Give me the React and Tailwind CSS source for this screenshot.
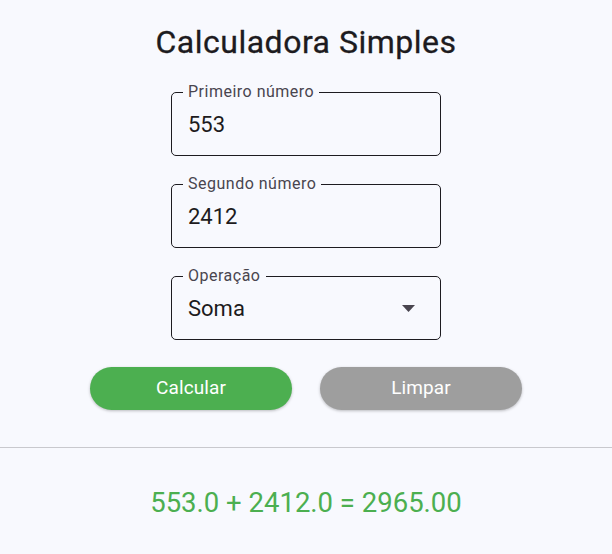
import { useState } from 'react'

function Field({ label, value, children }) {
  return (
    <div className="relative w-[270px] h-[64px] rounded-[5px] border border-[#1d1b20] flex items-center px-4">
      <span className="absolute left-[11px] -top-[11px] px-[5px] bg-[#f8f9fe] text-[16px] tracking-[0.5px] leading-[20px] text-[#49454f]">
        {label}
      </span>
      {children || <span className="text-[22px] text-[#1d1b20] pt-[1px]">{value}</span>}
    </div>
  )
}

export default function App() {
  const [first] = useState('553')
  const [second] = useState('2412')

  return (
    <div className="min-h-[554px] w-full bg-[#f8f9fe] font-['Roboto',sans-serif] flex flex-col items-center">
      <h1 className="pt-[23px] text-[32px] leading-[38px] tracking-[0.5px] text-[#1d1b20] [-webkit-text-stroke:0.3px_#1d1b20]">
        Calculadora Simples
      </h1>

      <div className="mt-[31px] flex flex-col gap-[28px]">
        <Field label="Primeiro número" value={first} />
        <Field label="Segundo número" value={second} />
        <Field label="Operação">
          <div className="flex w-full items-center justify-between">
            <span className="text-[22px] text-[#1d1b20]">Soma</span>
            <svg width="13" height="7" viewBox="0 0 13 7" className="mr-[9px]">
              <polygon points="0,0 13,0 6.5,7" fill="#49454f" />
            </svg>
          </div>
        </Field>
      </div>

      <div className="mt-[27px] flex gap-[28px]">
        <button className="w-[202px] h-[43px] rounded-full bg-[#4caf50] text-white text-[19px] tracking-[0.1px] shadow-[0_1px_3px_rgba(0,0,0,0.25)]">
          Calcular
        </button>
        <button className="w-[202px] h-[43px] rounded-full bg-[#9e9e9e] text-white text-[19px] tracking-[0.1px] shadow-[0_1px_3px_rgba(0,0,0,0.25)]">
          Limpar
        </button>
      </div>

      <div className="mt-[37px] w-full h-px bg-[#c9c9ce]" />

      <p className="mt-[37px] text-[27.5px] leading-[36px] text-[#4caf50]">553.0 + 2412.0 = 2965.00</p>
    </div>
  )
}
